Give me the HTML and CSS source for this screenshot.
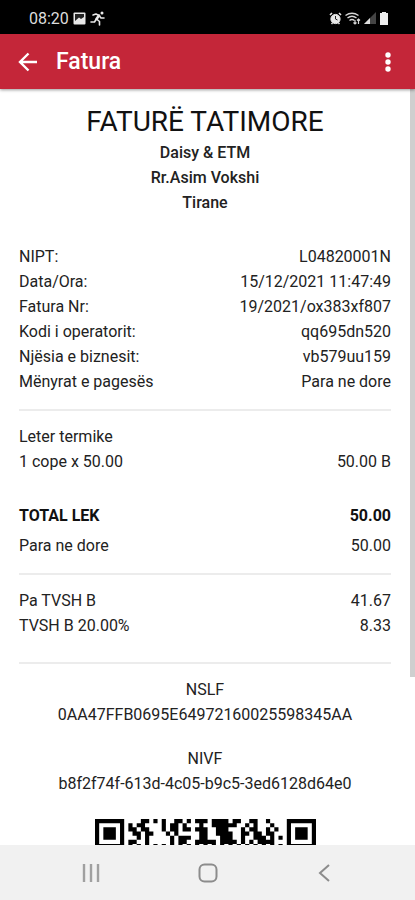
FILE: index.html
```html
<!DOCTYPE html>
<html lang="sq">
<head>
<meta charset="utf-8">
<meta name="viewport" content="width=device-width, initial-scale=1">
<title>Fatura</title>
<link rel="stylesheet" href="styles.css">
</head>
<body>
<div class="status">
  <div class="status-group">
    <span>08:20</span>
    <svg width="13" height="13" viewBox="0 0 13 13"><rect x="0.5" y="0.5" width="12" height="12" rx="1" fill="#e8e8e8"/><path d="M2 2h9v3L8 7 6 5.500 2 9z" fill="#222"/></svg>
    <svg width="15" height="15" viewBox="0 0 15 15" fill="none" stroke="#e8e8e8" stroke-width="1.600" stroke-linecap="round" stroke-linejoin="round"><circle cx="12" cy="2" r="1.500" fill="#e8e8e8" stroke="none"/><path d="M3 4L6 3l3 1.500L11 7h3"/><path d="M9 4.500L6.500 8" stroke-width="2.600"/><path d="M6.500 8l3 2.500V14M6 8.500L4.500 11H1"/></svg>
  </div>
  <div class="status-group status-right">
    <svg width="13" height="13" viewBox="0 0 13 13" fill="none" stroke="#e8e8e8"><circle cx="6.500" cy="7" r="4.600" fill="#e8e8e8"/><path d="M1 3l2-2M12 3l-2-2M2.500 12l1-1M10.500 12l-1-1" stroke-width="1.600"/><path d="M6.500 4v3l2 1" stroke="#222"/></svg>
    <svg width="16" height="13" viewBox="0 0 16 13" fill="none" stroke="#d8d8d8" stroke-width="1.400"><path d="M0.500 3.500Q7 -1 13.500 3.500M2.500 6Q7 2.500 11.500 6M4.500 8.500Q7 6.500 9.500 8.500"/><path d="M10 12V8M8.500 10.500L10 12l1.500-1.500M13.500 12V7M12 8.500L13.500 7 15 8.500" stroke-width="1.200"/></svg>
    <svg width="12" height="12" viewBox="0 0 12 12"><path d="M0 12L12 0V12z" fill="#444"/><path d="M0 12L6 6V12z" fill="#ddd"/></svg>
    <svg width="10" height="13" viewBox="0 0 10 13"><path d="M3 0h4v1h2v12H1V1h2z" fill="#eee"/></svg>
  </div>
</div>
<header class="appbar">
  <button class="icon-button" aria-label="Kthehu"><svg width="20" height="20" viewBox="0 0 20 20" fill="none" stroke="#fff" stroke-width="2.400"><path d="M19 10H2.500M10.500 1.500L2 10l8.500 8.500"/></svg></button>
  <h1>Fatura</h1>
  <button class="icon-button" aria-label="Menu"><svg width="20" height="20" viewBox="0 0 20 20" fill="#fff"><circle cx="10" cy="3" r="2.700"/><circle cx="10" cy="10" r="2.700"/><circle cx="10" cy="17" r="2.700"/></svg></button>
</header>
<main class="receipt">
  <div class="company">
    <h2>FATURË TATIMORE</h2>
    <p>Daisy &amp; ETM</p>
    <p>Rr.Asim Vokshi</p>
    <p>Tirane</p>
  </div>
  <dl class="rows details">
    <div><dt>NIPT:</dt><dd>L04820001N</dd></div>
    <div><dt>Data/Ora:</dt><dd>15/12/2021 11:47:49</dd></div>
    <div><dt>Fatura Nr:</dt><dd>19/2021/ox383xf807</dd></div>
    <div><dt>Kodi i operatorit:</dt><dd>qq695dn520</dd></div>
    <div><dt>Njësia e biznesit:</dt><dd>vb579uu159</dd></div>
    <div><dt>Mënyrat e pagesës</dt><dd>Para ne dore</dd></div>
  </dl>
  <hr>
  <p>Leter termike</p>
  <dl class="rows">
    <div><dt>1 cope x 50.00</dt><dd>50.00 B</dd></div>
  </dl>
  <dl class="rows totals">
    <div class="total"><dt>TOTAL LEK</dt><dd>50.00</dd></div>
    <div><dt>Para ne dore</dt><dd>50.00</dd></div>
  </dl>
  <hr>
  <dl class="rows taxes">
    <div><dt>Pa TVSH B</dt><dd>41.67</dd></div>
    <div><dt>TVSH B 20.00%</dt><dd>8.33</dd></div>
  </dl>
  <hr>
  <div class="codes">
    <div><p>NSLF</p><p>0AA47FFB0695E64972160025598345AA</p></div>
    <div><p>NIVF</p><p>b8f2f74f-613d-4c05-b9c5-3ed6128d64e0</p></div>
  </div>
  <svg class="qr" viewBox="0 0 53 7" role="img" aria-label="Kodi QR">
    <path fill="none" stroke="#000" d="M.5 .5h6v6h-6zM46.500 .5h6v6h-6z"/>
    <path d="M2 2h3v3H2zM48 2h3v3h-3z"/>
    <path fill="none" stroke="#000" d="M11 .5h2M14 .5h1M16 .5h1M19 .5h2M22 .5h1M24 .5h3M28 .5h4M33 .5h2M37 .5h2M41 .5h1
      M8 1.500h1M10 1.500h2M16 1.500h1M18 1.500h2M21 1.500h1M25 1.500h1M28 1.500h6M36 1.500h1M38 1.500h1M42 1.500h1
      M8 2.500h2M11 2.500h2M16 2.500h1M18 2.500h2M21 2.500h2M24 2.500h3M29 2.500h3M35 2.500h1M37 2.500h2M41 2.500h1M43 2.500h1
      M9 3.500h2M12 3.500h2M17 3.500h1M19 3.500h1M25 3.500h2M29 3.500h4M35 3.500h2M38 3.500h2M41 3.500h2
      M10 4.500h1M12 4.500h1M18 4.500h1M20 4.500h3M25 4.500h2M30 4.500h3M35 4.500h1M38 4.500h3M42 4.500h1M44 4.500h1
      M8 5.500h2M12 5.500h1M18 5.500h1M20 5.500h2M24 5.500h5M30 5.500h4M35 5.500h1M37 5.500h1M39 5.500h4"/>
    <path fill="none" stroke="#000" stroke-dasharray="1" d="M8 6.500h37"/>
  </svg>
  <span class="scroll-thumb"></span>
</main>
<nav class="navbar">
  <button class="icon-button" aria-label="Aplikacionet"><svg width="20" height="20" viewBox="0 0 20 20" stroke="#a0a0a0" stroke-width="2.400"><path d="M3 1v18M10 1v18M17 1v18"/></svg></button>
  <button class="icon-button" aria-label="Kreu"><svg width="20" height="20" viewBox="0 0 20 20" fill="none" stroke="#8c8c8c" stroke-width="2"><rect x="1.500" y="1.500" width="17" height="17" rx="5"/></svg></button>
  <button class="icon-button" aria-label="Prapa"><svg width="20" height="20" viewBox="0 0 20 20" fill="none" stroke="#8c8c8c" stroke-width="2"><path d="M15 2L6 10l9 8"/></svg></button>
</nav>
</body>
</html>
```

FILE: styles.css
```css
* { box-sizing: border-box; }
body, h1, h2, p, dl, dd { margin: 0; }
body {
  height: 100vh;
  display: flex;
  flex-direction: column;
  background: #fff;
  color: #222;
  font: 16px/25px Roboto, sans-serif;
}
svg { display: block; }
.status {
  flex: none;
  height: 34px;
  padding: 2px 26px 0 29px;
  display: flex;
  align-items: center;
  justify-content: space-between;
  background: #000;
  color: #ddd;
  font-size: 16px;
}
.status-group { display: flex; align-items: center; gap: 4px; }
.status-right { gap: 3px; }
.appbar {
  flex: none;
  height: 55px;
  padding: 0 17px 0 18px;
  display: flex;
  align-items: center;
  gap: 18px;
  background: #c42639;
  color: #fff;
  box-shadow: 0 1px 3px #0006;
  z-index: 1;
}
.appbar h1 { flex: 1; font-size: 23px; font-weight: 500; }
.icon-button {
  padding: 0;
  border: 0;
  background: none;
}
.receipt {
  flex: 1;
  min-height: 0;
  overflow: hidden;
  position: relative;
  padding: 15px 24px 0 19px;
}
.company { text-align: center; font-weight: 500; }
.company h2 { font-size: 28px; line-height: 36px; font-weight: 400; color: #111; }
.details { margin-top: 29px; }
.rows > div { display: flex; justify-content: space-between; }
hr { height: 2px; margin: 15px 0 13px; border: 0; background: #ececec; }
.totals { display: grid; gap: 5px; margin-top: 29px; }
.total { font-weight: 700; color: #111; }
.taxes { margin-bottom: 24px; }
.codes { display: grid; gap: 19px; text-align: center; }
.qr { width: 221px; margin: 23px auto 0; }
.scroll-thumb {
  position: absolute;
  top: 0;
  right: 0;
  width: 5px;
  height: 588px;
  background: #cfcfcf;
}
.navbar {
  flex: none;
  height: 55px;
  padding: 0 81px;
  display: flex;
  align-items: center;
  justify-content: space-between;
  background: #f1f1f1;
}
```
